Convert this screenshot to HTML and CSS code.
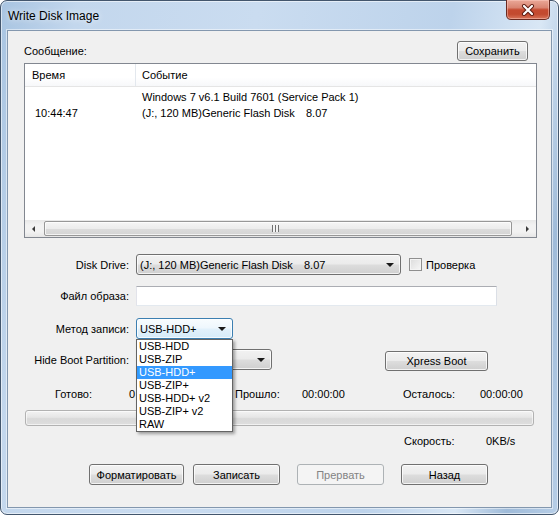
FILE: index.html
```html
<!DOCTYPE html>
<html>
<head>
<meta charset="utf-8">
<link rel="stylesheet" href="styles.css">
</head>
<body>
<div class="window">
  <div class="titlebar">
    <span class="title">Write Disk Image</span>
    <div class="close">
      <svg width="14" height="12" viewBox="0 0 14 12">
        <path d="M3 2 L11 10 M11 2 L3 10" stroke="#5a1a10" stroke-width="4" stroke-linecap="round"/>
        <path d="M3 2 L11 10 M11 2 L3 10" stroke="#ffffff" stroke-width="2.2" stroke-linecap="round"/>
      </svg>
    </div>
  </div>
  <div class="client">
    <div class="top-row">
      <span>Сообщение:</span>
      <button class="btn save">Сохранить</button>
    </div>
    <div class="list">
      <div class="list-head">
        <div class="h1">Время</div>
        <div class="h2">Событие</div>
      </div>
      <div class="list-body">
        <div class="row"><div class="c1"></div><div class="c2">Windows 7 v6.1 Build 7601 (Service Pack 1)</div></div>
        <div class="row"><div class="c1">10:44:47</div><div class="c2"><span class="tab">(J:, 120 MB)Generic Flash Disk</span>8.07</div></div>
      </div>
      <div class="hscroll">
        <div class="sb-btn"><span class="tri-left"></span></div>
        <div class="sb-track">
          <div class="thumb"><span class="grip"></span></div>
        </div>
        <div class="sb-btn"><span class="tri-right"></span></div>
      </div>
    </div>

    <div class="frow r-drive">
      <label>Disk Drive:</label>
      <div class="combo drive"><span class="ctext"><span class="tab tab2">(J:, 120 MB)Generic Flash Disk</span>8.07</span><span class="arrow"></span></div>
      <span class="check"></span>
      <span class="check-label">Проверка</span>
    </div>

    <div class="frow r-file">
      <label>Файл образа:</label>
      <div class="textbox"></div>
    </div>

    <div class="frow r-method">
      <label>Метод записи:</label>
      <div class="combo method focused">
        <span class="ctext">USB-HDD+</span><span class="arrow"></span>
        <div class="dropdown">
          <div class="item">USB-HDD</div>
          <div class="item">USB-ZIP</div>
          <div class="item sel">USB-HDD+</div>
          <div class="item">USB-ZIP+</div>
          <div class="item">USB-HDD+ v2</div>
          <div class="item">USB-ZIP+ v2</div>
          <div class="item">RAW</div>
        </div>
      </div>
    </div>

    <div class="frow r-hide">
      <label>Hide Boot Partition:</label>
      <div class="combo hide"><span class="arrow"></span></div>
      <button class="btn xpress">Xpress Boot</button>
    </div>

    <div class="status">
      <span class="s1">Готово:</span>
      <span>0</span>
      <span>Прошло:</span>
      <span>00:00:00</span>
      <span>Осталось:</span>
      <span>00:00:00</span>
    </div>

    <div class="progress"></div>

    <div class="speed">
      <span>Скорость:</span>
      <span>0KB/s</span>
    </div>

    <div class="buttons">
      <button class="btn b-format">Форматировать</button>
      <button class="btn b-write">Записать</button>
      <button class="btn b-stop" disabled>Прервать</button>
      <button class="btn b-back">Назад</button>
    </div>
  </div>
</div>
</body>
</html>
```

FILE: styles.css
```css
* { box-sizing: border-box; }
html, body { margin: 0; padding: 0; background: #ffffff; }
body {
  font-family: "Liberation Sans", Arial, sans-serif;
  font-size: 11px;
  color: #000;
  width: 559px;
  height: 515px;
  overflow: hidden;
}

.window {
  width: 559px;
  height: 515px;
  border: 1px solid #43566d;
  border-radius: 7px;
  padding: 0 6px 6px 6px;
  display: flex;
  flex-direction: column;
  background: linear-gradient(100deg, #a8c4e1 0%, #c3d7ed 12%, #cadcf0 40%, #bdd3eb 70%, #d9e7f5 84%, #9fbbd9 92%, #b7cee7 100%);
  box-shadow: inset 0 0 0 1px rgba(255,255,255,0.55);
}

.titlebar {
  height: 29px;
  display: flex;
  align-items: center;
}
.title {
  padding-left: 1px;
  font-size: 12px;
  color: #000;
  text-shadow: 0 0 6px rgba(255,255,255,0.9);
}
.close {
  margin-left: auto;
  align-self: flex-start;
  margin-top: -1px;
  margin-right: 2px;
  width: 44px;
  height: 20px;
  border: 1px solid #6a2a20;
  border-top: none;
  border-radius: 0 0 5px 5px;
  background: linear-gradient(#eaa898 0%, #d98572 40%, #c54a30 52%, #c24a2f 75%, #d8745a 100%);
  box-shadow: inset 0 0 0 1px rgba(255,210,200,0.45);
  display: flex;
  align-items: center;
  justify-content: center;
}

.client {
  flex: 1;
  border: 1px solid #8397ae;
  background: #f0f0f0;
  padding: 10px 23px 0 16px;
  box-shadow: 0 0 0 1px rgba(255,255,255,0.5);
}

.top-row {
  display: flex;
  justify-content: space-between;
  align-items: center;
  height: 20px;
}

.btn {
  font-family: inherit;
  font-size: 11px;
  color: #000;
  height: 21px;
  padding: 0;
  border: 1px solid #707070;
  border-radius: 3px;
  background: linear-gradient(#f2f2f2 0%, #ebebeb 48%, #dddddd 52%, #cfcfcf 100%);
  box-shadow: inset 0 0 0 1px rgba(255,255,255,0.75);
}
.btn:disabled {
  border-color: #adb2b5;
  background: #f4f4f4;
  color: #838383;
  box-shadow: none;
}
.save { width: 71px; height: 20px; }

.list {
  margin-top: 2px;
  width: 513px;
  height: 175px;
  border: 1px solid #828790;
  background: #fff;
  display: flex;
  flex-direction: column;
}
.list-head {
  height: 23px;
  display: flex;
  border-bottom: 1px solid #e5e5e5;
  background: linear-gradient(#ffffff, #ffffff 60%, #f7f8fa);
}
.h1 {
  width: 111px;
  padding-left: 7px;
  border-right: 1px solid #e3e8ee;
  display: flex;
  align-items: center;
}
.h2 {
  padding-left: 6px;
  display: flex;
  align-items: center;
}
.list-body {
  flex: 1;
  padding-top: 2px;
}
.row {
  display: flex;
  height: 16px;
  align-items: center;
}
.row .c1 { width: 111px; padding-left: 10px; }
.row .c2 { padding-left: 6px; white-space: nowrap; }
.tab { display: inline-block; width: 164px; }

.hscroll {
  height: 17px;
  display: flex;
  background: linear-gradient(#e8e8e8, #f2f2f2 30%, #f2f2f2 70%, #e6e6e6);
}
.sb-btn {
  width: 17px;
  display: flex;
  align-items: center;
  justify-content: center;
}
.tri-left {
  width: 0; height: 0;
  border-top: 3px solid transparent;
  border-bottom: 3px solid transparent;
  border-right: 3px solid #3a3a3a;
}
.tri-right {
  width: 0; height: 0;
  border-top: 3px solid transparent;
  border-bottom: 3px solid transparent;
  border-left: 3px solid #3a3a3a;
}
.sb-track {
  flex: 1;
  display: flex;
  align-items: center;
  padding-left: 2px;
}
.thumb {
  width: 468px;
  height: 15px;
  border: 1px solid #979797;
  border-radius: 2px;
  background: linear-gradient(#f5f5f5 0%, #ececec 50%, #dcdcdc 51%, #d4d4d4 100%);
  box-shadow: inset 0 0 0 1px rgba(255,255,255,0.7);
  display: flex;
  align-items: center;
  justify-content: center;
  padding-right: 6px;
}
.grip {
  width: 7px;
  height: 7px;
  background: repeating-linear-gradient(90deg, #707070 0 1px, #f4f4f4 1px 3px);
}

.frow {
  display: flex;
  align-items: center;
  height: 21px;
}
.frow label {
  width: 105px;
  text-align: right;
  margin-right: 7px;
  white-space: nowrap;
}
.r-drive { margin-top: 16px; }
.r-file { margin-top: 11px; height: 20px; }
.r-method { margin-top: 12px; }
.r-hide { margin-top: 10px; }

.combo {
  position: relative;
  height: 21px;
  border: 1px solid #707070;
  border-radius: 3px;
  background: linear-gradient(#f2f2f2 0%, #ebebeb 48%, #dddddd 52%, #cfcfcf 100%);
  box-shadow: inset 0 0 0 1px rgba(255,255,255,0.75);
  display: flex;
  align-items: center;
  justify-content: flex-end;
  padding-left: 3px;
}
.ctext { flex: 1; white-space: nowrap; }
.tab2 { width: 164px; }
.arrow {
  width: 0; height: 0;
  margin-right: 6px;
  border-left: 4px solid transparent;
  border-right: 4px solid transparent;
  border-top: 4px solid #1a1a1a;
}
.drive { width: 265px; }
.method { width: 97px; }
.hide { width: 136px; }
.focused {
  border-color: #3c7fb1;
  background: linear-gradient(#f8fcfe 0%, #eef7fd 48%, #e2f1fb 52%, #d6ebf9 100%);
}

.check {
  margin-left: 8px;
  width: 13px;
  height: 13px;
  border: 1px solid #8f8f8f;
  background: linear-gradient(135deg, #dcdcdc, #f7f7f7);
  box-shadow: inset 0 0 0 1px #f4f4f4;
}
.check-label { margin-left: 4px; }

.textbox {
  width: 361px;
  height: 20px;
  background: #fff;
  border: 1px solid;
  border-color: #abadb3 #dbdfe6 #e3e9ef #e2e3ea;
}

.dropdown {
  position: absolute;
  top: 20px;
  left: -1px;
  width: 97px;
  height: 93px;
  border: 1px solid #646464;
  background: #fff;
  box-shadow: 2px 2px 3px rgba(0,0,0,0.35);
  z-index: 10;
}
.item {
  height: 13px;
  line-height: 13px;
  padding-left: 2px;
  white-space: nowrap;
}
.item.sel {
  background: #3399ff;
  color: #fff;
}

.xpress {
  width: 103px;
  height: 20px;
  margin-left: 113px;
  align-self: flex-start;
  margin-top: 2px;
}

.status {
  margin-top: 17px;
  height: 14px;
  display: grid;
  grid-template-columns: 105px 106px 67px 101px 77px auto;
  align-items: center;
}
.status .s1 { padding-left: 31px; }

.progress {
  margin-top: 9px;
  margin-left: 1px;
  width: 509px;
  height: 16px;
  border: 1px solid #b2b2b2;
  border-radius: 3px;
  background: linear-gradient(#f3f3f3 0%, #e6e6e6 45%, #d9d9d9 55%, #dedede 100%);
  box-shadow: inset 0 0 0 1px rgba(255,255,255,0.6);
}

.speed {
  margin-top: 8px;
  height: 14px;
  display: grid;
  grid-template-columns: 82px auto;
  padding-left: 380px;
  align-items: center;
}

.buttons {
  margin-top: 16px;
  display: flex;
  padding-left: 65px;
}
.b-format { width: 95px; }
.b-write { width: 87px; margin-left: 9px; }
.b-stop { width: 87px; margin-left: 17px; }
.b-back { width: 87px; margin-left: 17px; }
```
